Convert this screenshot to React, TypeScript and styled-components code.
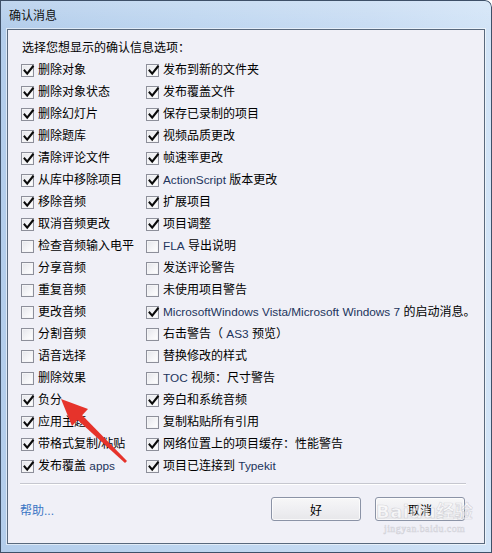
import React from "react";
import styled, { createGlobalStyle } from "styled-components";

const Global = createGlobalStyle`
  html, body { margin: 0; padding: 0; }
  body {
    width: 492px; height: 553px; overflow: hidden; background: #ffffff;
    font-family: "Liberation Sans", "Noto Sans CJK SC", sans-serif;
  }
`;

const Window = styled.div`
  position: relative;
  width: 492px;
  height: 553px;
  box-sizing: border-box;
  display: flex;
  flex-direction: column;
  border-radius: 0 7px 0 0;
  background:
    linear-gradient(to bottom, rgba(255,255,255,0.18), rgba(255,255,255,0) 29px),
    linear-gradient(to right, #b3cdeb 0%, #bed6f0 40%, #c8dcf3 75%, #d2e4f7 100%);
  box-shadow: inset 0 0 0 1px #3e5068;
  overflow: hidden;
`;

const TitleBar = styled.div`
  height: 29px;
  flex: none;
  display: flex;
  align-items: center;
  padding-left: 9px;
  font-size: 12px;
  color: #101010;
`;

const Client = styled.div`
  margin: 0 7px;
  height: 515px;
  box-sizing: border-box;
  border: 1px solid #59697d;
  box-shadow: 0 0 0 1px rgba(255,255,255,0.55);
  background: #f0f0f7;
  display: flex;
  flex-direction: column;
`;

const Heading = styled.div`
  margin: 9px 0 0 14px;
  height: 18px;
  line-height: 18px;
  font-size: 12px;
  color: #000;
`;

const Grid = styled.div`
  margin: 2px 0 0 13px;
  display: grid;
  grid-template-columns: 125px 1fr;
  grid-template-rows: repeat(19, 22px);
  grid-auto-flow: column;
`;

const Row = styled.label`
  display: flex;
  align-items: center;
  gap: 4px;
  font-size: 12px;
  line-height: 14px;
  color: #000;
  white-space: nowrap;
`;

const Latin = styled.span`
  color: #22345c;
  font-size: 11.8px;
`;

const Box = styled.span`
  width: 13px;
  height: 13px;
  flex: none;
  box-sizing: border-box;
  border: 1px solid #8d8f9a;
  background: linear-gradient(135deg, #e4e5ea 0%, #f6f6f8 60%, #ffffff 100%);
  box-shadow: inset 0 0 0 1px #f4f4f6;
  display: flex;
  align-items: center;
  justify-content: center;
  position: relative;
`;

const CheckSvg = styled.svg`
  position: absolute;
  left: 0;
  top: -1px;
  overflow: visible;
`;

const Separator = styled.div`
  margin: 6px 18px 0 12px;
  height: 1px;
  background: #c6c7cf;
  box-shadow: 0 1px 0 #ffffff;
`;

const Footer = styled.div`
  margin-top: 13px;
  height: 24px;
  padding: 0 19px 0 12px;
  display: flex;
  align-items: center;
  gap: 14px;
`;

const Help = styled.span`
  flex: 1;
  font-size: 12px;
  color: #3a76c4;
`;

const Button = styled.button`
  width: 90px;
  height: 24px;
  box-sizing: border-box;
  border: 1px solid #8b93a6;
  border-radius: 3px;
  background: linear-gradient(to bottom, #f7f7f8 0%, #efeff2 50%, #e7e7ea 100%);
  box-shadow: inset 0 0 0 1px rgba(255,255,255,0.7);
  font-family: "Liberation Sans", "Noto Sans CJK SC", sans-serif;
  font-size: 12px;
  color: #000;
  padding: 0;
`;

const Overlay = styled.svg`
  position: absolute;
  left: 0;
  top: 0;
  pointer-events: none;
`;

const Watermark = styled.div`
  position: absolute;
  left: 376px;
  top: 501px;
  display: flex;
  flex-direction: column;
  align-items: center;
  pointer-events: none;
  color: rgba(255, 255, 255, 0.55);
  -webkit-text-stroke: 0.6px rgba(160, 160, 170, 0.4);
`;

const WmMain = styled.span`
  font-family: "DejaVu Sans", "Noto Sans CJK SC", sans-serif;
  font-weight: bold;
  font-size: 18px;
  line-height: 22px;
  letter-spacing: 0.5px;
`;

const WmSub = styled.span`
  font-family: "Liberation Serif", serif;
  font-size: 10px;
  line-height: 12px;
  letter-spacing: 0.4px;
`;

type Item = { text: string; checked: boolean };

const left: Item[] = [
  { text: "删除对象", checked: true },
  { text: "删除对象状态", checked: true },
  { text: "删除幻灯片", checked: true },
  { text: "删除题库", checked: true },
  { text: "清除评论文件", checked: true },
  { text: "从库中移除项目", checked: true },
  { text: "移除音频", checked: true },
  { text: "取消音频更改", checked: true },
  { text: "检查音频输入电平", checked: false },
  { text: "分享音频", checked: false },
  { text: "重复音频", checked: false },
  { text: "更改音频", checked: false },
  { text: "分割音频", checked: false },
  { text: "语音选择", checked: false },
  { text: "删除效果", checked: false },
  { text: "负分", checked: true },
  { text: "应用主题", checked: true },
  { text: "带格式复制/粘贴", checked: true },
  { text: "发布覆盖 apps", checked: true },
];

const right: Item[] = [
  { text: "发布到新的文件夹", checked: true },
  { text: "发布覆盖文件", checked: true },
  { text: "保存已录制的项目", checked: true },
  { text: "视频品质更改", checked: true },
  { text: "帧速率更改", checked: true },
  { text: "ActionScript 版本更改", checked: true },
  { text: "扩展项目", checked: true },
  { text: "项目调整", checked: true },
  { text: "FLA 导出说明", checked: false },
  { text: "发送评论警告", checked: false },
  { text: "未使用项目警告", checked: false },
  { text: "MicrosoftWindows Vista/Microsoft Windows 7 的启动消息。", checked: true },
  { text: "右击警告（ AS3 预览）", checked: false },
  { text: "替换修改的样式", checked: false },
  { text: "TOC 视频：尺寸警告", checked: false },
  { text: "旁白和系统音频", checked: true },
  { text: "复制粘贴所有引用", checked: false },
  { text: "网络位置上的项目缓存：性能警告", checked: true },
  { text: "项目已连接到 Typekit", checked: true },
];

function renderText(t: string) {
  const parts = t.split(/([A-Za-z0-9][A-Za-z0-9 .\/]*[A-Za-z0-9]|[A-Za-z0-9])/);
  return parts.map((p, i) =>
    /[A-Za-z0-9]/.test(p) ? <Latin key={i}>{p}</Latin> : <React.Fragment key={i}>{p}</React.Fragment>
  );
}

function Check({ checked }: { checked: boolean }) {
  return (
    <Box>
      {checked && (
        <CheckSvg width="13" height="13" viewBox="0 0 13 13">
          <path d="M2.6 6.6 L5.2 9.6 L10.8 2.6" fill="none" stroke="#0a0a0a" strokeWidth="2.1" strokeLinecap="square" strokeLinejoin="miter" />
        </CheckSvg>
      )}
    </Box>
  );
}

export default function App() {
  const items = [...left, ...right];
  return (
    <>
      <Global />
      <Window>
        <TitleBar>确认消息</TitleBar>
        <Client>
          <Heading>选择您想显示的确认信息选项：</Heading>
          <Grid>
            {items.map((it, i) => (
              <Row key={i}>
                <Check checked={it.checked} />
                <span>{renderText(it.text)}</span>
              </Row>
            ))}
          </Grid>
          <Separator />
          <Footer>
            <Help>帮助...</Help>
            <Button>好</Button>
            <Button>取消</Button>
          </Footer>
        </Client>
        <Watermark>
          <WmMain>Baidu经验</WmMain>
          <WmSub>jingyan.baidu.com</WmSub>
        </Watermark>
        <Overlay width="492" height="553" viewBox="0 0 492 553">
          <polygon points="61,399 88,409 72,426" fill="#e6332b" />
          <polygon points="80.5,413.5 76,418.5 125,463 127,461" fill="#e6332b" />
        </Overlay>
      </Window>
    </>
  );
}
